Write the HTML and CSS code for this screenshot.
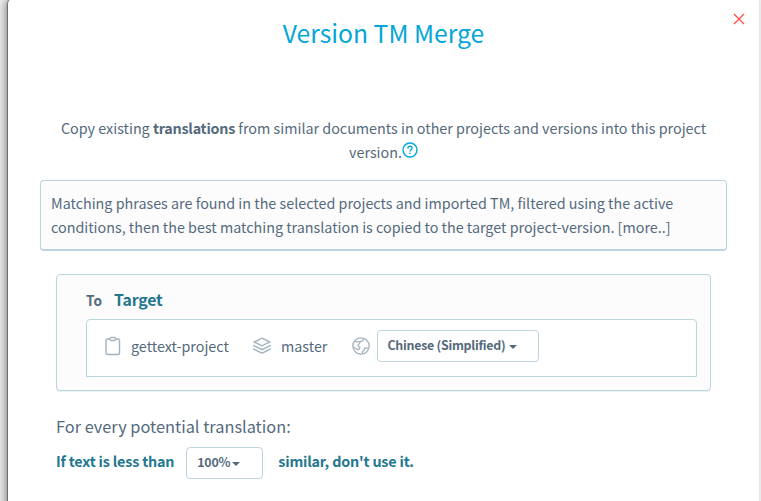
FILE: index.html
```html
<!DOCTYPE html>
<html lang="en">
<head>
<meta charset="utf-8">
<title>Version TM Merge</title>
<link rel="stylesheet" href="styles.css">
</head>
<body>
<main class="modal">
  <button class="close" aria-label="Close"><svg width="12" height="12" viewBox="0 0 12 12"><path d="M1 1l10 10M11 1L1 11"/></svg></button>
  <h1 class="title"><span>Version TM Merge</span></h1>
  <p class="intro"><span>Copy existing <b>translations</b> from similar documents in other projects and versions into this project</span><br><span>version.</span><svg class="help" width="16" height="16" viewBox="0 0 16 16"><circle cx="8" cy="8" r="7"/><path d="M5.9 6.4c0-1.3.9-2.1 2.1-2.1s2.1.8 2.1 1.9c0 1.5-2.1 1.6-2.1 3.2M8 10.8v1.2"/></svg></p>
  <div class="note"><span>Matching phrases are found in the selected projects and imported TM, filtered using the active</span><br><span>conditions, then the best matching translation is copied to the target project-version. [more..]</span></div>
  <section class="panel">
    <div class="panel-head"><span class="to">To</span><span class="target">Target</span></div>
    <div class="well">
      <svg class="icon clip" width="16" height="20" viewBox="0 0 16 20"><path d="M5 3H2.500Q1 3 1 4.500V17Q1 18.500 2.500 18.500H13Q14.500 18.500 14.500 17V4.500Q14.500 3 13 3H10.500"/><path d="M6 1.500H9.500L11 2.500V3.500L9.500 4.500H6L4.500 3.500V2.500Z"/></svg>
      <span class="project">gettext-project</span>
      <svg class="icon layers" width="20" height="18" viewBox="0 0 20 18"><path d="M10 1.200L17.800 5L10 8.800L2.200 5ZM1.200 8.300L10 12.600L18.800 8.300M1.200 11.900L10 16.200L18.800 11.900"/></svg>
      <span class="version">master</span>
      <svg class="icon globe" width="18" height="18" viewBox="0 0 18 18"><circle cx="9" cy="9" r="8.200"/><path d="M2.800 4.300C4 5.500 5.500 4.500 7.500 4.800C9 6.500 5.800 7 6 8.500S8.300 9.800 7.800 11.300S6 12.500 5.500 12.500L1 10M7.500 4.800L10.500 3.800L12 1.500M17 11H12.500L12 13.500L10.500 14.500V16.900"/></svg>
      <button class="select lang"><span>Chinese (Simplified)</span><i class="caret"></i></button>
    </div>
  </section>
  <h2 class="subhead"><span>For every potential translation:</span></h2>
  <div class="rule"><span class="less">If text is less than</span><button class="select percent"><span>100%</span><i class="caret"></i></button><span class="similar">similar, don't use it.</span></div>
</main>
</body>
</html>
```
FILE: styles.css
```css
* { box-sizing: border-box; }
body {
  margin: 0;
  height: 501px;
  overflow: hidden;
  padding: 0 2px 0 8px;
  background: #f0f0f0;
  color: #546a7c;
  font: 14.33px/24px "Noto Sans CJK SC", "Open Sans", sans-serif;
}
span { white-space: nowrap; }
.modal {
  position: relative;
  height: 520px;
  margin-top: -2px;
  padding: 2px 48px 0;
  background: #fff;
  border-radius: 6px 0 0 6px;
  box-shadow: -1px 0 1px rgba(0,0,0,.4), -4px 0 8px -1px rgba(0,0,0,.4);
}
.close {
  position: absolute;
  top: 15px;
  right: 14px;
  width: 12px;
  height: 12px;
  padding: 0;
  border: 0;
  background: none;
}
svg { display: block; flex: none; fill: none; }
.close svg { stroke: #ff4b4b; stroke-width: 1.3; }
.title {
  margin: 0;
  padding-top: 12px;
  height: 116px;
  color: #03a6d7;
  text-align: center;
  font-size: 24.7px;
  line-height: 40px;
  font-weight: 400;
}
.intro { margin: 0 -16px; height: 64px; text-align: center; }
b { font-weight: 700; letter-spacing: -.23px; }
.help { display: inline-block; vertical-align: 0; stroke: #03a6d7; stroke-width: 1.4; }
.note {
  height: 71px;
  margin: 0 -16px 23px;
  padding: 10px 10px;
  border: 1px solid #bcd4de;
  border-bottom-width: 2px;
  border-radius: 4px;
  background: #fcfcfc;
}
.panel {
  height: 117px;
  width: 655px;
  padding: 13px 13px 13px 29px;
  border: 1px solid #bcd4de;
  border-radius: 4px;
  background: #fcfcfc;
  box-shadow: 0 1px 1px #eaf1f4;
}
.panel-head { display: flex; height: 31px; gap: 12px; align-items: baseline; }
.to { font-weight: 700; font-size: 13.7px; }
.target { font-weight: 700; font-size: 15.9px; letter-spacing: -.2px; color: #24778f; }
.well {
  display: flex;
  align-items: center;
  height: 58px;
  padding: 0 18px 4px;
  border: 1px solid #bcd4de;
  border-radius: 4px 4px 0 0;
  background: #fff;
}
.icon { stroke: #a3b3bf; stroke-width: 1.4; }
.globe { stroke-width: 1.25; }
.project { width: 98px; margin: 0 23px 0 10.5px; }
.version { width: 47px; margin: 0 23.5px 0 9px; }
.select {
  display: flex;
  align-items: center;
  height: 32px;
  padding: 0 0 2px 10px;
  gap: 4px;
  border: 1px solid #bcd4de;
  border-radius: 4px;
  background: #fff;
  color: #546a7c;
  font: 700 12.4px/20px "Noto Sans CJK SC", "Open Sans", sans-serif;
  letter-spacing: -.26px;
}
.lang { width: 162px; margin-left: 7px; }
.percent { width: 77px; margin: 0 15px 0 12px; gap: 2px; }
.caret {
  border: solid transparent;
  border-width: 4px 4px 0;
  border-top-color: #546a7c;
  margin-top: 3px;
}
.clip { margin-left: -.5px; }
.subhead { margin: 23px 0 9px; font-size: 16.35px; line-height: 24px; font-weight: 400; }
.rule { display: flex; align-items: center; color: #24778f; font-weight: 700; letter-spacing: -.18px; }
.less, .similar { padding-bottom: 4px; }
```
